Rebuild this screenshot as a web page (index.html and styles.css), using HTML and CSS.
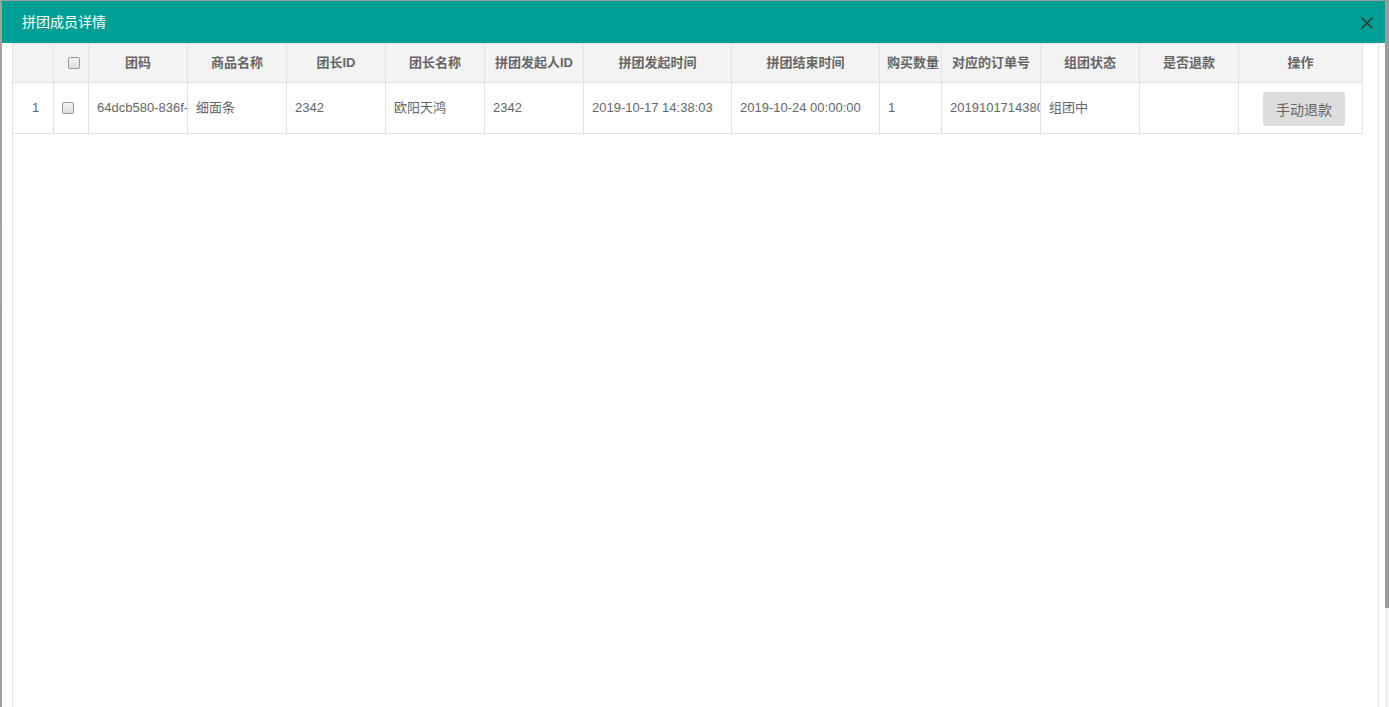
FILE: index.html
```html
<!DOCTYPE html>
<html lang="zh-CN">
<head>
<meta charset="utf-8">
<title>拼团成员详情</title>
<link rel="stylesheet" href="styles.css">
</head>
<body>
<div class="page">
  <div class="left-edge"></div>
  <div class="dialog">
    <div class="dialog-head">
      <span class="dialog-title">拼团成员详情</span>
      <span class="close" aria-label="关闭">
        <svg width="12" height="12" viewBox="0 0 12 12"><path d="M0.5 0.5 L11.5 11.5 M11.5 0.5 L0.5 11.5" stroke="#2f2f2f" stroke-width="1.4" fill="none"/></svg>
      </span>
    </div>
    <div class="dialog-body">
      <div class="grid-box">
        <div class="grid">
          <div class="cell head"></div>
          <div class="cell head"><span class="cb cb-head"></span></div>
          <div class="cell head center">团码</div>
          <div class="cell head center">商品名称</div>
          <div class="cell head center">团长ID</div>
          <div class="cell head center">团长名称</div>
          <div class="cell head center">拼团发起人ID</div>
          <div class="cell head center">拼团发起时间</div>
          <div class="cell head center">拼团结束时间</div>
          <div class="cell head center tight">购买数量</div>
          <div class="cell head center">对应的订单号</div>
          <div class="cell head center">组团状态</div>
          <div class="cell head center">是否退款</div>
          <div class="cell head center">操作</div>

          <div class="cell row num">1</div>
          <div class="cell row"><span class="cb cb-row"></span></div>
          <div class="cell row">64dcb580-836f-</div>
          <div class="cell row">细面条</div>
          <div class="cell row">2342</div>
          <div class="cell row">欧阳天鸿</div>
          <div class="cell row">2342</div>
          <div class="cell row">2019-10-17 14:38:03</div>
          <div class="cell row">2019-10-24 00:00:00</div>
          <div class="cell row">1</div>
          <div class="cell row">2019101714380</div>
          <div class="cell row">组团中</div>
          <div class="cell row"></div>
          <div class="cell row"><button class="btn">手动退款</button></div>
        </div>
      </div>
    </div>
  </div>
  <div class="scrollbar">
    <div class="thumb"></div>
    <div class="track"></div>
  </div>
</div>
</body>
</html>
```

FILE: styles.css
```css
html, body {
  margin: 0;
  padding: 0;
  height: 707px;
  overflow: hidden;
  background: #9c9c9c;
  font-family: "Liberation Sans", "Noto Sans CJK SC", sans-serif;
}

.page {
  display: flex;
  height: 706px;
  margin-top: 1px;
}

.left-edge {
  width: 2px;
  flex: none;
  background: linear-gradient(#9fa39d 0, #9ea59b 300px, #9d9d9d 320px, #9d9d9d 100%);
}

.dialog {
  width: 1383px;
  flex: none;
  display: flex;
  flex-direction: column;
  background: #fff;
  overflow: hidden;
}

.dialog-head {
  height: 42px;
  flex: none;
  background: #009f95;
  display: flex;
  align-items: center;
  justify-content: space-between;
  padding: 0 12px 0 20px;
}

.dialog-title {
  color: #fff;
  font-size: 14px;
  line-height: 20px;
}

.close {
  display: flex;
  width: 12px;
  height: 12px;
  margin-top: 2px;
}

.dialog-body {
  flex: 1;
  display: flex;
  padding: 0 6px 0 10px;
}

.grid-box {
  flex: 1;
  border: 1px solid #e2e2e2;
  border-bottom: none;
  border-radius: 2px 2px 0 0;
}

.grid {
  display: grid;
  grid-template-columns: 41px 35px 99px 99px 99px 99px 99px 148px 148px 62px 99px 99px 99px 124px;
  grid-template-rows: 39px 51px;
  width: 1350px;
}

.cell {
  box-sizing: border-box;
  border-right: 1px solid #e2e2e2;
  border-bottom: 1px solid #e2e2e2;
  display: flex;
  align-items: center;
  overflow: hidden;
  white-space: nowrap;
  color: #666;
  font-size: 13px;
  line-height: 18px;
}

.head {
  background: #f3f3f3;
  font-weight: bold;
  padding-bottom: 1px;
}

.center {
  justify-content: center;
}

.tight {
  justify-content: flex-start;
  padding-left: 7px;
}

.row {
  padding-left: 8px;
}

.num {
  padding-left: 0;
  justify-content: center;
  padding-right: 0;
  text-indent: 5px;
}

.cb {
  display: block;
  box-sizing: border-box;
  width: 12px;
  height: 12px;
  border: 1px solid #9a9a9a;
  border-radius: 2px;
  background: linear-gradient(#f4f4f4, #dcdcdc);
  flex: none;
}

.cb-head {
  margin-left: 14px;
}

.cb-row {
  margin-left: 0;
}

.btn {
  margin-left: 16px;
  width: 82px;
  height: 34px;
  border: none;
  border-radius: 3px;
  background: #dddddd;
  color: #666;
  font-family: "Liberation Sans", "Noto Sans CJK SC", sans-serif;
  font-size: 14px;
  padding: 0;
  margin-top: 1px;
}

.scrollbar {
  width: 4px;
  flex: none;
  display: flex;
  flex-direction: column;
  margin-top: -1px;
}

.thumb {
  height: 608px;
  background: #9a9a9a;
}

.track {
  flex: 1;
  background: #f1f1f1;
}
```
